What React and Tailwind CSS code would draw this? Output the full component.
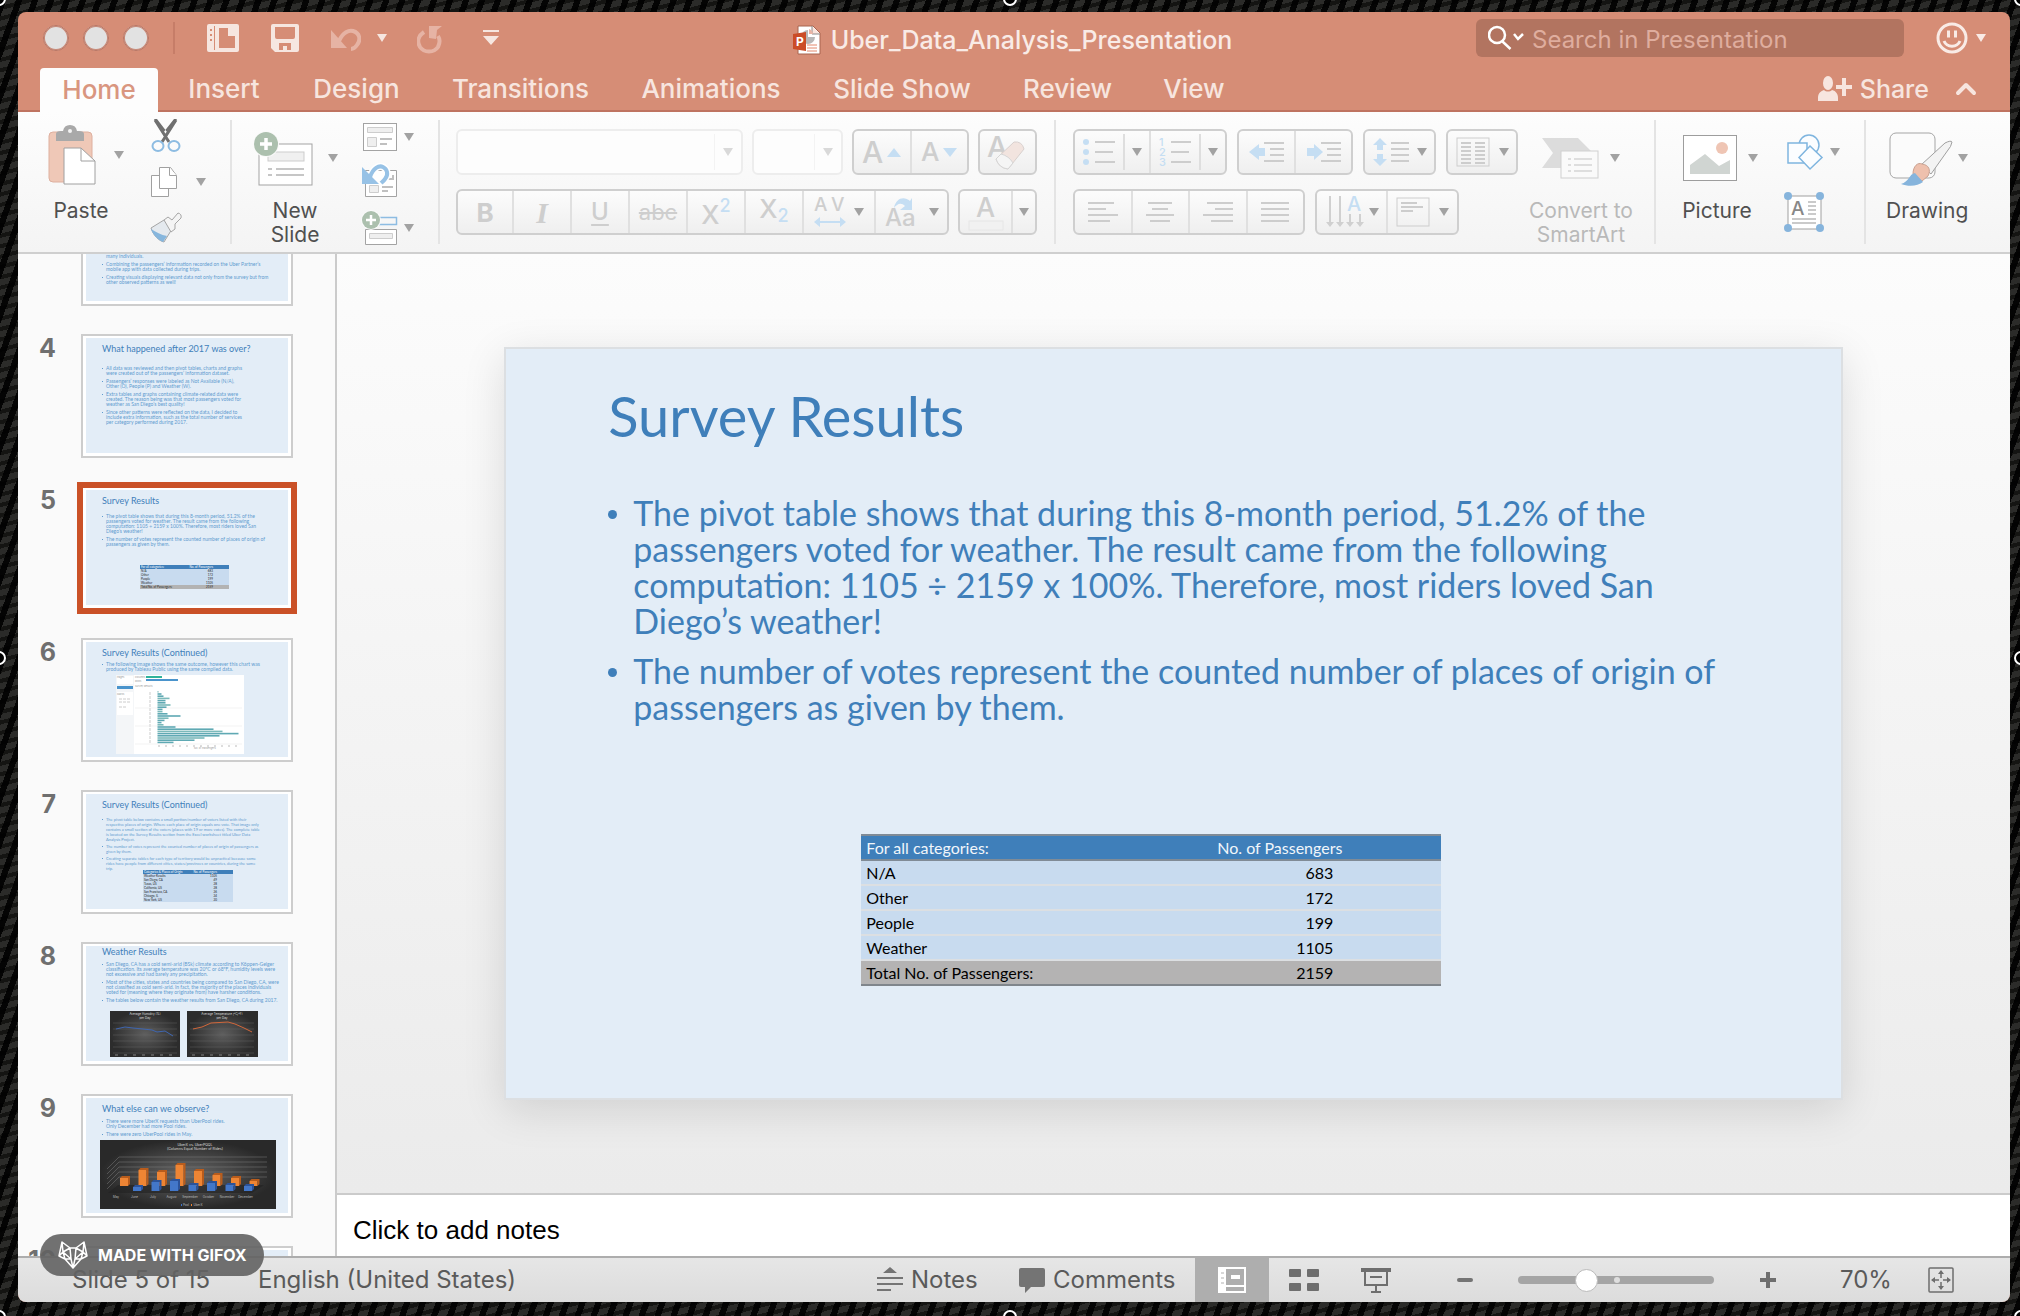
import React from "react";

const Caret = ({ className = "fill-[#a2a2a2]" }) => (
  <svg viewBox="0 0 10 8" width="10" height="8" className={"shrink-0 " + className} aria-hidden="true">
    <path d="M0 0h10L5 8z" />
  </svg>
);

const Sep = () => <div className="mt-2 h-[124px] w-[2px] shrink-0 bg-[#e4e4e4]" />;

/* ---------- title bar ---------- */

function TitleBar() {
  return (
    <header className="flex h-[52px] shrink-0 items-center pl-[25px] pr-6">
      <div className="flex flex-1 items-center">
        <div className="flex gap-[14px]">
          {["Close", "Minimize", "Zoom"].map((n) => (
            <button key={n} aria-label={n} className="size-[26px] rounded-full border border-[#b87361] bg-[#e2e2e2] shadow-[inset_0_0_0_1px_#c98a78]" />
          ))}
        </div>
        <div className="ml-6 h-8 w-[2px] bg-[#c67d68]" />
        <button aria-label="Open from template" className="ml-8">
          <svg width="32" height="30" viewBox="0 0 32 30" fill="#f6e6e0">
            <path fillRule="evenodd" d="M2 1h28a2 2 0 0 1 2 2v24a2 2 0 0 1-2 2H2a2 2 0 0 1-2-2V3a2 2 0 0 1 2-2zM8 3H7v24h1zM12 5v20h16V13h-7V5z" />
            <path d="M22 5l6 6h-6z" />
            <path d="M3 6h2v2H3zM3 11h2v2H3zM3 16h2v2H3z" fill="#d68d76" />
          </svg>
        </button>
        <button aria-label="Save" className="ml-8">
          <svg width="28" height="30" viewBox="0 0 28 30" fill="#f6e6e0">
            <path fillRule="evenodd" d="M2 1h24a2 2 0 0 1 2 2v24a2 2 0 0 1-2 2H4l-4-4V3a2 2 0 0 1 2-2zM4 4v10a2 2 0 0 0 2 2h16a2 2 0 0 0 2-2V4zM8 20v7h4v-4h4v4h4v-7z" />
          </svg>
        </button>
        <button aria-label="Undo" className="ml-8 mt-1">
          <svg width="30" height="24" viewBox="0 0 30 24" fill="none" stroke="#e6b3a4">
            <path d="M0 2v18h16z" fill="#e6b3a4" stroke="none" />
            <path d="M8 13C12 4 18 2 22 3c7 2 8 9 4 14-2 3-4 4-6 4" strokeWidth="4" />
          </svg>
        </button>
        <button aria-label="Undo list" className="ml-4"><Caret className="fill-[#f6e6e0]" /></button>
        <button aria-label="Repeat" className="ml-[30px] mt-1">
          <svg width="26" height="28" viewBox="0 0 26 28" fill="none" stroke="#e6b3a4">
            <path d="M12 0h13l-5 4-1 9-7-1z" fill="#e6b3a4" stroke="none" />
            <path d="M7 6C1 10 0 16 3 21c4 6 14 6 18 0 2-4 2-8 0-11" strokeWidth="4" />
          </svg>
        </button>
        <button aria-label="Customize toolbar" className="ml-10">
          <svg width="16" height="16" viewBox="0 0 16 16" fill="#f6e6e0"><path d="M0 0h16v2H0zM0 6h16l-8 9z" /></svg>
        </button>
      </div>
      <h1 className="flex items-center gap-[10px] pt-1 pr-1 text-[25px] leading-[30px] font-medium text-[#f9ebe6]">
        <svg width="28" height="32" viewBox="0 0 28 32" aria-hidden="true">
          <path d="M5 2h15l7 7v21H5z" fill="#fff" stroke="#a8644f" />
          <path d="M19 2v8h8" fill="#fbe5de" stroke="#8b8b8b" />
          <path d="M15 6v7h7a7 7 0 1 1-7-7z" fill="#b7b7b7" />
          <path d="M16 5a6 6 0 0 1 4 5h-4z" fill="#e9b5a5" />
          <path d="M14 21h10M14 24h10M14 27h10" stroke="#e2886c" />
          <path d="M0 10l13-2v19L0 25z" fill="#cb4c27" />
          <text x="3" y="22" fontSize="12" fontWeight="700" fill="#fff" fontFamily="Inter">P</text>
        </svg>
        Uber_Data_Analysis_Presentation
      </h1>
      <div className="flex flex-1 items-center justify-end">
        <label className="flex h-[38px] w-[428px] items-center rounded-md bg-[#b27460] pl-3">
          <svg width="36" height="28" viewBox="0 0 36 28" fill="none" stroke="#fff" strokeWidth="2.5" aria-hidden="true">
            <circle cx="9" cy="11" r="8" /><path d="M14.500 17.500l8 7.500M26 10l4 5 5-5" />
          </svg>
          <input aria-label="Search in Presentation" placeholder="Search in Presentation" className="ml-2 min-w-0 flex-1 bg-transparent pt-1 text-[24px] leading-[30px] outline-none placeholder:text-[#dfad9e]" />
        </label>
        <button aria-label="Feedback" className="ml-8 flex items-center gap-2">
          <svg width="32" height="34" viewBox="0 0 32 34" fill="none" stroke="#f9ebe6" strokeWidth="3">
            <circle cx="16" cy="17" r="14" /><path d="M12.500 9.500v7M19.500 9.500v7M8 20c3 7 13 7 16 0" />
          </svg>
          <Caret className="fill-[#f9ebe6]" />
        </button>
      </div>
    </header>
  );
}

const TABS = [
  ["Insert", "w-[118px]"], ["Design", "w-[131px]"], ["Transitions", "w-[181px]"], ["Animations", "w-[184px]"],
  ["Slide Show", "w-[182px]"], ["Review", "w-[133px]"], ["View", "w-[104px]"],
];

function TabBar() {
  return (
    <nav className="flex h-[48px] shrink-0 items-end border-b-2 border-[#bf7461] text-[26px] leading-[28px] font-medium text-[#f7e5df]">
      <button className="-mb-[2px] ml-[22px] h-[44px] w-[118px] rounded-t bg-[#fdfdfd] text-[#d99680]">Home</button>
      <div className="ml-[7px] flex h-[42px] flex-1 items-center gap-2">
        {TABS.map(([t, w]) => (
          <button key={t} className={"h-[42px] shrink-0 whitespace-nowrap " + w}>{t}</button>
        ))}
      </div>
      <div className="flex h-[42px] items-center pr-[33px]">
        <button className="flex items-center gap-2">
          <svg width="34" height="26" viewBox="0 0 34 26" fill="#f7e5df" aria-hidden="true">
            <ellipse cx="10" cy="7" rx="5" ry="7" />
            <path d="M0 25v-3c0-5 3-7 6-8 2 2 6 2 8 0 4 1 6 4 6 8v3zM24 2h4v7h6v4h-6v7h-4v-7h-6V9h6z" />
          </svg>
          <span className="text-[25px]">Share</span>
        </button>
        <button aria-label="Collapse ribbon" className="ml-[26px]">
          <svg width="22" height="16" viewBox="0 0 22 16" fill="none" stroke="#f7e5df" strokeWidth="4" strokeLinecap="round" strokeLinejoin="round"><path d="M3 12l8-8 8 8" /></svg>
        </button>
      </div>
    </nav>
  );
}

/* ---------- ribbon ---------- */

const PasteIcon = () => (
  <svg width="48" height="60" viewBox="0 0 48 60">
    <rect x="1" y="7" width="43" height="50" rx="4" fill="#efc8b7" stroke="#deb09f" />
    <path d="M8 16V9q0-3 5-3h2q1-6 7-6t7 6h2q5 0 5 3v7z" fill="#a9a9a9" />
    <circle cx="22" cy="6" r="2" fill="#f3f3f3" />
    <path d="M16 23h17l14 13v23H16z" fill="#fff" stroke="#a0a0a0" />
    <path d="M33 23v13h14" fill="none" stroke="#a0a0a0" />
  </svg>
);
const CutIcon = () => (
  <svg width="32" height="34" viewBox="0 0 32 34" fill="none">
    <path d="M4 0l3 0 10 13 -3 4zM27 0h-3L13 14l3 3z" fill="#707070" />
    <path d="M5 1l14 22M26 1L12 23" stroke="#707070" strokeWidth="3" />
    <ellipse cx="8" cy="27" rx="5.500" ry="5" stroke="#8dbce2" strokeWidth="2" />
    <ellipse cx="24" cy="27" rx="5.500" ry="5" stroke="#8dbce2" strokeWidth="2" />
  </svg>
);
const CopyIcon = () => (
  <svg width="32" height="32" viewBox="0 0 32 32" fill="#fff" stroke="#a0a0a0">
    <path d="M1.500 9.500h17v21h-17z" /><path d="M9.500 1.500h11l6 8v13h-17z" /><path d="M19.500 1.500v8h7" />
  </svg>
);
const BrushIcon = () => (
  <svg width="32" height="30" viewBox="0 0 32 30">
    <path d="M1 15l13-8 8 9-8 13C9 28 3 22 1 15z" fill="#e4e9ee" stroke="#a5a5a5" />
    <path d="M1 16c5 3 10 6 16 7l-4 6C8 27 3 22 1 16z" fill="#86b6dd" />
    <path d="M14 7l4-3 4 3 6-7q4 1 3 5l-6 6v5l-4 3z" fill="#f4f4f4" stroke="#a5a5a5" />
  </svg>
);
const NewSlideIcon = () => (
  <svg width="60" height="64" viewBox="0 0 60 64">
    <rect x="5" y="18" width="53" height="41" fill="#fff" stroke="#a3a3a3" />
    <rect x="14" y="26" width="36" height="9" fill="#f0f0f0" stroke="#cdcdcd" />
    <path d="M14 43h4M22 43h28M14 49h4M22 49h28" stroke="#c6c6c6" strokeWidth="2" />
    <circle cx="12" cy="18" r="13" fill="#fafafa" /><circle cx="12" cy="18" r="12" fill="#acc0ae" />
    <path d="M12 12v12M6 18h12" stroke="#fff" strokeWidth="3.500" />
  </svg>
);
const LayoutIcon = () => (
  <svg width="36" height="30" viewBox="0 0 36 30" fill="#efefef">
    <rect x="1.500" y="1.500" width="33" height="27" fill="#fff" stroke="#a3a3a3" />
    <path d="M5.500 5.500h25v5h-25zM5.500 15.500h9v9h-9z" stroke="#cdcdcd" /><path d="M18 17h12M18 22h7" stroke="#c0c0c0" strokeWidth="2" />
  </svg>
);
const ResetIcon = () => (
  <svg width="36" height="36" viewBox="0 0 36 36" fill="none">
    <path d="M3.500 8.500h31v26h-31z" fill="#fff" stroke="#a3a3a3" />
    <path d="M7.500 23.500h9v7h-9z" fill="#efefef" stroke="#cdcdcd" /><path d="M20 25h11M20 29h6M24 17h7v-4" stroke="#c0c0c0" strokeWidth="2" />
    <path d="M8 15c3-9 9-12 13-10s6 7 2 12c-1 2-3 3-4 4" stroke="#fff" strokeWidth="7" />
    <path d="M0 5v17h17z" fill="#97c2e6" /><path d="M8 15c3-9 9-12 13-10s6 7 2 12c-1 2-3 3-4 4" stroke="#97c2e6" strokeWidth="4" />
  </svg>
);
const SectionIcon = () => (
  <svg width="36" height="36" viewBox="0 0 36 36" fill="none">
    <path d="M14 7.500h20.500v7H14" stroke="#8dbce2" strokeWidth="1.500" />
    <path d="M3.500 19.500h31v15h-31z" fill="#fff" stroke="#a3a3a3" /><path d="M7.500 23.500h23v5h-23z" fill="#efefef" stroke="#cdcdcd" />
    <circle cx="9" cy="10" r="10" fill="#fafafa" /><circle cx="9" cy="10" r="9" fill="#acc0ae" /><path d="M9 5v10M4 10h10" stroke="#fff" strokeWidth="2.500" />
  </svg>
);
const SmartIcon = () => (
  <svg width="56" height="42" viewBox="0 0 56 42">
    <path d="M0 1h36l15 15-15 15H0l11-15z" fill="#dcdcdc" />
    <rect x="19" y="14" width="37" height="27" fill="#fafafa" stroke="#d0d0d0" />
    <path d="M26 22h3M32 22h18M26 28h3M32 28h18M26 34h3M32 34h18" stroke="#dedede" strokeWidth="2" />
  </svg>
);
const PictureIcon = () => (
  <svg width="54" height="48" viewBox="0 0 54 48">
    <rect x=".5" y="1.500" width="53" height="45" fill="#fff" stroke="#9d9d9d" />
    <circle cx="39" cy="14" r="6" fill="#efc5b4" />
    <path d="M7 40V31l15-11 14 12 11-6v14z" fill="#d0d5d2" />
  </svg>
);
const DrawingIcon = () => (
  <svg width="64" height="58" viewBox="0 0 64 58">
    <rect x="1" y="4" width="45" height="45" rx="6" fill="#fbfbfb" stroke="#a5a5a5" />
    <path d="M32 36L56 14q6-3 7-1-1 5-4 8L42 45z" fill="#f3f3f3" stroke="#a0a0a0" />
    <path d="M24 45c0-8 5-12 9-10 7 1 9 6 6 12l-6 5z" fill="#eec0ad" stroke="#c9a191" />
    <path d="M12 55c8-2 8-10 14-11l8 9c-5 4-14 5-22 2z" fill="#86b4dc" />
  </svg>
);
const ShapesIcon = () => (
  <svg width="40" height="36" viewBox="0 0 40 36" fill="#fbfdff" stroke="#7fb5df" strokeWidth="1.500">
    <circle cx="25" cy="11" r="10" /><path d="M4 9h19v20H4z" /><path d="M26 12l12 11.500L26 35 15 23.500z" />
  </svg>
);
const TextBoxIcon = () => (
  <svg width="40" height="40" viewBox="0 0 40 40">
    <rect x="4" y="4" width="33" height="33" fill="#fff" stroke="#a0a0a0" />
    <text x="7" y="23" fontFamily="Inter" fontSize="19" fill="#888" fontWeight="500">A</text>
    <path d="M24 10h8M24 14h8M24 18h8M24 22h8M8 27h24M8 31h24" stroke="#cacaca" strokeWidth="2" />
    <g fill="#86b4dc"><circle cx="4" cy="4" r="4" /><circle cx="36" cy="4" r="4" /><circle cx="4" cy="36" r="4" /><circle cx="36" cy="36" r="4" /></g>
  </svg>
);

function Big({ box, row, icon, label, dim }) {
  return (
    <button className={"flex shrink-0 flex-col " + box}>
      <span className={"flex h-[87px] items-center pt-[5px] " + row}>{icon}<Caret /></span>
      <span className={"w-full text-center text-[21px] leading-[24px] whitespace-pre-line " + (dim ? "text-[#b9b9b9]" : "text-[#505050]")}>{label}</span>
    </button>
  );
}

const Small = ({ name, icon, caret, className }) => (
  <button aria-label={name} className={"flex items-center " + className}>{icon}{caret && <Caret />}</button>
);

const Group = ({ className, children }) => (
  <div className={"flex h-[46px] shrink-0 divide-x-2 divide-[#e0e0e0] rounded-md border-2 border-[#cfcfcf] bg-linear-to-b from-[#fcfcfc] to-[#efefef] " + className}>{children}</div>
);
const Cell = ({ name, className = "flex-1", children }) => (
  <button aria-label={name} className={"flex items-center justify-center text-[#cecece] " + className}>{children}</button>
);
const Lines = ({ d, w = 32, children }) => (
  <svg width={w} height="30" viewBox={"0 0 " + w + " 30"} fill="none" stroke="#cdcdcd" strokeWidth="2"><path d={d} />{children}</svg>
);

function FontGroup() {
  return (
    <div className="flex shrink-0 flex-col gap-[14px] pt-[17px] pr-[17px] pl-4">
      <div className="flex gap-[9px]">
        {[["Font", "w-[287px]"], ["Font size", "w-[91px]"]].map(([n, w]) => (
          <div key={n} className={"flex h-[46px] items-center rounded-md border-2 border-[#ededed] bg-[#fdfdfd] pr-2 " + w}>
            <select aria-label={n} disabled className="h-full min-w-0 flex-1 appearance-none bg-transparent" />
            <span className="mr-2 h-9 w-px bg-[#f3f3f3]" />
            <Caret className="fill-[#d9d9d9]" />
          </div>
        ))}
        <Group className="w-[117px]">
          <Cell name="Increase font size"><span className="text-[30px] leading-[36px] font-medium">A</span><svg width="14" height="9" viewBox="0 0 14 9" className="ml-1"><path d="M7 0l7 9H0z" fill="#c5def3" /></svg></Cell>
          <Cell name="Decrease font size"><span className="text-[26px] leading-[36px] font-medium">A</span><svg width="14" height="9" viewBox="0 0 14 9" className="ml-1"><path d="M7 9L0 0h14z" fill="#c5def3" /></svg></Cell>
        </Group>
        <Group className="w-[59px]">
          <Cell name="Clear formatting">
            <svg width="44" height="40" viewBox="0 0 44 40">
              <text x="1" y="25" fontFamily="Inter" fontSize="29" fontWeight="500" fill="#cecece">A</text>
              <path d="M10 27L28 10q8-1 10 7L22 37q-9-1-12-10z" fill="#f2e4df" stroke="#d8d0ce" />
              <path d="M10 27l5-5q8 2 12 9l-5 6q-9-1-12-10z" fill="#f5f5f5" stroke="#d5d5d5" />
            </svg>
          </Cell>
        </Group>
      </div>
      <div className="flex gap-[9px]">
        <Group className="w-[493px]">
          <Cell name="Bold" className="w-[56px] text-[26px] font-bold">B</Cell>
          <Cell name="Italic" className="w-[58px] font-['Liberation_Serif'] text-[30px] font-bold italic">I</Cell>
          <Cell name="Underline" className="w-[58px] text-[24px] font-medium underline underline-offset-4">U</Cell>
          <Cell name="Strikethrough" className="w-[58px] text-[22px] line-through">abc</Cell>
          <Cell name="Superscript" className="w-[58px] pt-1 text-[26px] font-medium">X<sup className="-top-2 text-[18px] text-[#c5def3]">2</sup></Cell>
          <Cell name="Subscript" className="w-[58px] pb-2 text-[26px] font-medium">X<sub className="top-2 text-[18px] text-[#c5def3]">2</sub></Cell>
          <Cell name="Character spacing" className="w-[72px] gap-2">
            <svg width="32" height="34" viewBox="0 0 32 34"><text x="0" y="16" fontFamily="Inter" fontSize="19" fontWeight="500" fill="#cecece">A</text><text x="17" y="16" fontFamily="Inter" fontSize="19" fontWeight="500" fill="#cecece">V</text><path d="M0 27l6-5v4h20v-4l6 5-6 5v-4H6v4z" fill="#c5def3" /></svg>
            <Caret />
          </Cell>
          <Cell name="Change case" className="flex-1 gap-2">
            <svg width="36" height="34" viewBox="0 0 36 34"><text x="0" y="31" fontFamily="Inter" fontSize="24" fontWeight="500" fill="#cecece">Aa</text><path d="M9 13C11 3 19 1 25 6l2-3v12H15l5-4c-4-4-8-2-11 2z" fill="#c5def3" /></svg>
            <Caret />
          </Cell>
        </Group>
        <Group className="w-[79px]">
          <Cell name="Font color" className="w-[53px]">
            <svg width="36" height="40" viewBox="0 0 36 40"><text x="8" y="25" fontFamily="Inter" fontSize="27" fontWeight="500" fill="#cecece">A</text><rect x="1" y="29" width="34" height="9" fill="#f1f1f1" stroke="#e6e6e6" /></svg>
          </Cell>
          <Cell name="Font color options"><Caret /></Cell>
        </Group>
      </div>
    </div>
  );
}

function ParagraphGroup() {
  return (
    <div className="flex shrink-0 flex-col gap-[14px] pt-[17px] pl-[17px]">
      <div className="flex gap-[10px]">
        <Group className="w-[154px]">
          {["Bullets", "Numbering"].map((n, i) => (
            <div key={n} className="flex flex-1 items-center">
              <Cell name={n} className="w-[48px]">
                <Lines w={32} d="M12 5h20M12 15h18M12 25h20">
                  {i === 0 ? (
                    <g fill="#c5def3" stroke="none"><circle cx="3" cy="5" r="3" /><circle cx="3" cy="15" r="3" /><circle cx="3" cy="25" r="3" /></g>
                  ) : (
                    <g fill="#c5def3" stroke="none" fontFamily="Inter" fontSize="11" fontWeight="500"><text x="0" y="9">1</text><text x="0" y="19">2</text><text x="0" y="29">3</text></g>
                  )}
                </Lines>
              </Cell>
              <span className="h-9 w-[2px] bg-[#dedede]" />
              <Cell name={n + " options"}><Caret /></Cell>
            </div>
          ))}
        </Group>
        <Group className="w-[116px]">
          <Cell name="Decrease indent"><Lines w={36} d="M15 6h20M21 12h14M21 18h14M15 24h20"><path d="M0 15l10-8v4h6v8h-6v4z" fill="#c5def3" stroke="none" /></Lines></Cell>
          <Cell name="Increase indent"><Lines w={36} d="M15 6h20M21 12h14M21 18h14M15 24h20"><path d="M17 15L8 7v4H1v8h7v4z" fill="#c5def3" stroke="none" /></Lines></Cell>
        </Group>
        <Group className="w-[73px]">
          <Cell name="Line spacing" className="flex-1 gap-2"><Lines w={36} d="M18 6h18M18 12h18M18 18h18M18 24h18"><path d="M7 1l7 7h-4v5H4V8H0zM7 29l7-7h-4v-5H4v5H0z" fill="#c5def3" stroke="none" /></Lines><Caret /></Cell>
        </Group>
        <Group className="w-[72px]">
          <Cell name="Columns" className="flex-1 gap-[9px]">
            <Lines w={34} d="M5 6h10M5 10h10M5 14h10M5 18h10M5 22h10M5 26h10M19 6h10M19 10h10M19 14h10M19 18h10M19 22h10M19 26h10"><rect x="1" y="1" width="32" height="28" strokeWidth="1" /></Lines>
            <Caret />
          </Cell>
        </Group>
      </div>
      <div className="flex gap-[10px]">
        <Group className="w-[232px]">
          <Cell name="Align left"><Lines d="M1 6h26M1 12h18M1 18h30M1 24h22" /></Cell>
          <Cell name="Center"><Lines d="M4 6h24M8 12h16M2 18h28M6 24h20" /></Cell>
          <Cell name="Align right"><Lines d="M5 6h26M13 12h18M1 18h30M9 24h22" /></Cell>
          <Cell name="Justify"><Lines d="M2 6h28M2 12h28M2 18h28M2 24h28" /></Cell>
        </Group>
        <Group className="w-[144px]">
          <Cell name="Text direction" className="flex-1 gap-1">
            <svg width="40" height="36" viewBox="0 0 40 36" fill="#d0d0d0">
              <path d="M4 2h2v26h3l-4 5-4-5h3zM14 2h2v26h3l-4 5-4-5h3zM24 20h2v8h3l-4 5-4-5h3zM34 20h2v8h3l-4 5-4-5h3z" />
              <text x="22" y="17" fontFamily="Inter" fontSize="20" fill="#c5def3" fontWeight="500">A</text>
            </svg>
            <Caret />
          </Cell>
          <Cell name="Align text" className="flex-1 gap-[9px]"><Lines w={34} d="M5 6h16M5 10h22M5 14h12"><rect x="1" y="1" width="32" height="28" strokeWidth="1" /></Lines><Caret /></Cell>
        </Group>
      </div>
    </div>
  );
}

function Ribbon() {
  return (
    <div className="flex h-[142px] shrink-0 border-b-2 border-[#cfcfcf] bg-linear-to-b from-[#fdfdfd] to-[#f4f4f4] [&_svg]:overflow-visible">
      <div className="flex w-[212px] shrink-0 pl-5">
        <Big box="w-[86px]" row="pl-[10px] gap-[18px] pb-[6px]" icon={<PasteIcon />} label="Paste" />
        <div className="ml-[26px] flex flex-col pt-px">
          <Small name="Cut" className="h-[46px]" icon={<CutIcon />} />
          <Small name="Copy" className="h-[46px] gap-[14px]" icon={<CopyIcon />} caret />
          <Small name="Format painter" className="h-[46px]" icon={<BrushIcon />} />
        </div>
      </div>
      <Sep />
      <div className="flex w-[206px] shrink-0 pl-5">
        <Big box="w-[86px]" row="pl-[2px] gap-[14px]" icon={<NewSlideIcon />} label={"New\nSlide"} />
        <div className="ml-6 flex flex-col pt-px">
          <Small name="Layout" className="h-[46px] gap-[6px] pt-[2px]" icon={<LayoutIcon />} caret />
          <Small name="Reset" className="h-[46px] pb-1" icon={<ResetIcon />} />
          <Small name="Section" className="h-[46px] gap-[6px]" icon={<SectionIcon />} caret />
        </div>
      </div>
      <Sep />
      <FontGroup />
      <Sep />
      <div className="flex w-[598px] shrink-0">
        <ParagraphGroup />
        <Big box="ml-2 w-[110px]" row="pl-4 gap-3" icon={<SmartIcon />} label={"Convert to\nSmartArt"} dim />
      </div>
      <Sep />
      <div className="flex w-[208px] shrink-0 pl-5">
        <Big box="w-[82px]" row="pl-[7px] gap-[11px]" icon={<PictureIcon />} label="Picture" />
        <div className="ml-[26px] flex flex-col pt-[10px]">
          <Small name="Shapes" className="h-[60px] gap-[6px]" icon={<ShapesIcon />} caret />
          <Small name="Text box" className="h-[60px]" icon={<TextBoxIcon />} />
        </div>
      </div>
      <Sep />
      <div className="flex flex-1 pl-5">
        <Big box="w-[82px]" row="pl-[3px] gap-[5px]" icon={<DrawingIcon />} label="Drawing" />
      </div>
    </div>
  );
}

/* ---------- thumbnails ---------- */

function MiniList({ items, className = "text-[5px] leading-[5px] gap-[3px]" }) {
  return (
    <ul className={"flex flex-col pl-4 whitespace-pre text-[#5f9bcf] " + className}>
      {items.map((t) => (
        <li key={t} className="flex gap-[3px]"><span className="mt-[2px] size-px bg-[#5f9bcf]" /><span>{t}</span></li>
      ))}
    </ul>
  );
}

const MiniTable = ({ rows, className }) => (
  <table className={"table-fixed border-collapse bg-[#c8dbef] text-left text-[3px] leading-[4px] text-[#222] " + className}>
    <tbody>
      {rows.map(([a, b], i) => (
        <tr key={a} className={i === 0 ? "bg-[#3f7fba] text-white" : a.startsWith("Total") ? "bg-[#b3b3b3]" : ""}>
          <td className="p-0 pl-px whitespace-nowrap">{a}</td><td className="p-0 pr-4 text-right whitespace-nowrap">{b}</td>
        </tr>
      ))}
    </tbody>
  </table>
);

const BARS = [1, 4, 6, 12, 8, 8, 13, 9, 5, 5, 10, 23, 11, 7, 4, 6, 18, 56, 65, 81, 62, 47, 37, 16];
const TableauChart = () => (
  <svg width="128" height="79" viewBox="0 0 128 79" className="ml-[30px] shrink-0">
    <rect width="128" height="79" fill="#fff" />
    <path d="M0 0h18v79H0z" fill="#f4f6f8" /><path d="M1 1h16v8H1zM1 17h16v23H1z" fill="#fff" />
    <path d="M1 11h16v3H1zM30 4h32v2H30z" fill="#4a94cc" /><path d="M30 1h16v2H30z" fill="#2fb39b" />
    <g fontFamily="Inter" fontSize="2.500" fill="#999"><text x="1" y="3">Pages</text><text x="1" y="20">Marks</text><text x="19" y="3">Columns</text><text x="19" y="7">Rows</text><text x="19" y="12">Survey Results</text><text x="78" y="74">No. of Passengers</text></g>
    <path d="M3 24h12M3 27h12M3 32h8M34 17v52" stroke="#ccc" strokeDasharray="3 1" />
    <path d="M19 33h107M19 51h107M19 69h107" stroke="#e4e4e4" strokeWidth=".5" />
    {BARS.map((b, i) => <rect key={i} x="41.500" y={16 + i * 2.200} width={b} height="1.600" fill={i % 3 ? "#5fa9b3" : "#7bb9ba"} />)}
    <path d="M42 71h84" stroke="#bbb" strokeDasharray="2 5" />
  </svg>
);

const DarkLine = ({ title, d, color, w }) => (
  <svg width={w} height="46" viewBox={"0 0 " + w + " 46"}>
    <defs><radialGradient id={"g" + w}><stop offset="0" stopColor="#5e5e5e" /><stop offset="1" stopColor="#2c2c2c" /></radialGradient></defs>
    <rect width={w} height="46" fill={"url(#g" + w + ")"} />
    <text x="35" y="4" fontSize="3" textAnchor="middle" fill="#ddd" fontFamily="Inter">{title}</text>
    <text x="35" y="8" fontSize="3" textAnchor="middle" fill="#ddd" fontFamily="Inter">per Day</text>
    <path d="M3 12h64M3 18h64M3 24h64M3 30h64M3 36h64M3 42h64" stroke="#6b6b6b" strokeWidth=".4" />
    <path d={d} fill="none" stroke={color} strokeWidth="1" />
    <path d="M5 44h62" stroke="#999" strokeWidth=".8" strokeDasharray="3 6" />
  </svg>
);

const ORANGE = [8, 16, 14, 21, 15, 11, 8, 5];
const BLUE = [4, 9, 10, 6, 8, 6, 5];
const UberChart = () => (
  <svg width="176" height="69" viewBox="0 0 176 69" className="ml-[14px] shrink-0">
    <defs><radialGradient id="uber"><stop offset="0" stopColor="#666" /><stop offset="1" stopColor="#292929" /></radialGradient></defs>
    <rect width="176" height="69" fill="url(#uber)" />
    <g fontFamily="Inter" fontSize="3.500" fill="#ddd" textAnchor="middle"><text x="95" y="6">UberX vs. UberPOOL</text><text x="95" y="10">(Columns Equal Number of Rides)</text></g>
    <path d="M7 29l12-12h148M7 34l12-12h148M7 39l12-12h148M7 44l12-12h148M7 49l12-12h148" fill="none" stroke="#7c7c7c" strokeWidth=".5" />
    <path d="M18 45h146l-12 8H8z" fill="#222" opacity=".6" />
    {ORANGE.map((h, i) => (
      <g key={i}><rect x={20 + i * 18.500} y={46 - h} width="8" height={h} fill="#ee8534" /><path d={`M${20 + i * 18.500} ${46 - h}l2-2h8v${h}l-2 2v-${h}z`} fill="#b85c1c" /></g>
    ))}
    {BLUE.map((h, i) => (
      <g key={i}><rect x={33 + i * 18.500} y={51 - h} width="8" height={h} fill="#4377c9" /><path d={`M${33 + i * 18.500} ${51 - h}l2-2h8v${h}l-2 2v-${h}z`} fill="#2c539a" /></g>
    ))}
    <g fontFamily="Inter" fontSize="3" fill="#bbb" textAnchor="middle">
      {["May", "June", "July", "August", "September", "October", "November", "December"].map((m, i) => <text key={m} x={16 + i * 18.500} y="58">{m}</text>)}
      <text x="86" y="66">Pool</text><text x="98" y="66">UberX</text>
    </g>
    <path d="M81 64h1v2h-1z" fill="#4377c9" /><path d="M91 64h1v2h-1z" fill="#ee8534" />
  </svg>
);

const MiniTitle = ({ className = "pt-[6px]", children }) => (
  <p className={"shrink-0 pl-4 text-[9px] leading-[10px] whitespace-nowrap text-[#3f7fba] " + className}>{children}</p>
);

const SLIDES = [
  {
    n: 3,
    body: <MiniList className="mt-[63px] gap-[3px] text-[5px] leading-[5px]" items={["\nmany individuals.", "Combining the passengers’ information recorded on the Uber Partner’s\nmobile app with data collected during trips.", "Creating visuals displaying relevant data not only from the survey but from\nother observed patterns as well!"]} />,
  },
  {
    n: 4,
    body: (
      <>
        <MiniTitle>What happened after 2017 was over?</MiniTitle>
        <MiniList className="mt-[12px] gap-[3px] text-[5px] leading-[5px]" items={["All data was reviewed and then pivot tables, charts and graphs\nwere created out of the passengers’ information dataset.", "Passengers’ responses were labeled as Not Available (N/A),\nOther (O), People (P) and Weather (W).", "Extra tables and graphs containing climate-related data were\ncreated. The reason being was that most passengers voted for\nweather as San Diego’s best quality!", "Since other patterns were reflected on the data, I decided to\ninclude extra information, such as the total number of services\nper category performed during 2017."]} />
      </>
    ),
  },
  {
    n: 5, selected: true,
    body: (
      <>
        <MiniTitle>Survey Results</MiniTitle>
        <MiniList className="mt-2 gap-[3px] text-[5px] leading-[5px]" items={["The pivot table shows that during this 8-month period, 51.2% of the\npassengers voted for weather. The result came from the following\ncomputation: 1105 ÷ 2159 x 100%. Therefore, most riders loved San\nDiego’s weather!", "The number of votes represent the counted number of places of origin of\npassengers as given by them."]} />
        <MiniTable className="mt-[18px] ml-[54px] w-[89px]" rows={[["For all categories:", "No. of Passengers"], ["N/A", "683"], ["Other", "172"], ["People", "199"], ["Weather", "1105"], ["Total No. of Passengers:", "2159"]]} />
      </>
    ),
  },
  {
    n: 6,
    body: (
      <>
        <MiniTitle>Survey Results (Continued)</MiniTitle>
        <MiniList className="mt-1 mb-[3px] text-[5px] leading-[5px]" items={["The following image shows the same outcome, however this chart was\nproduced by Tableau Public using the same compiled data."]} />
        <TableauChart />
      </>
    ),
  },
  {
    n: 7,
    body: (
      <>
        <MiniTitle>Survey Results (Continued)</MiniTitle>
        <MiniList className="mt-[7px] gap-[2px] text-[4px] leading-[5px]" items={["The pivot table below contains a small portion/number of voters listed with their\nrespective places of origin. Where each place of origin equals one vote. That image only\ncontains a small section of the voters (places with 19 or more votes). The complete table\nis located on the Survey Results section from the Excel worksheet titled Uber Data\nAnalysis Project.", "The number of votes represent the counted number of places of origin of passengers as\ngiven by them.", "Creating separate tables for each type of territory would be unpractical because some\nrides have people from different cities, states/provinces or countries, during the same\ntrip."]} />
        <MiniTable className="-mt-px ml-[57px] w-[90px]" rows={[["Categories & Places of Origin", "No. of Passengers"], ["Weather Results", "1105"], ["San Diego, CA", "49"], ["Texas, US", "28"], ["California, US", "28"], ["San Francisco, CA", "26"], ["Chicago, IL", "24"], ["New York, US", "20"]]} />
      </>
    ),
  },
  {
    n: 8,
    body: (
      <>
        <MiniTitle className="pt-px">Weather Results</MiniTitle>
        <MiniList className="mt-[5px] gap-[3px] text-[5px] leading-[5px]" items={["San Diego, CA has a cold semi-arid (BSk) climate according to Köppen-Geiger\nclassification. Its average temperature was 20ºC or 68ºF, humidity levels were\nnot excessive and had barely any precipitation.", "Most of the cities, states and countries being compared to San Diego, CA, were\nnot classified as cold semi-arid. In fact, the majority of the places individuals\nvoted for (meaning where they originate from) have harsher conditions.", "The tables below contain the weather results from San Diego, CA during 2017."]} />
        <div className="mt-2 ml-6 flex gap-[7px]">
          <DarkLine w={70} title="Average Humidity (%)" color="#3f66b0" d="M6 18l9-2 8 1 10 1 9 1 5 2 8-1 8 5" />
          <DarkLine w={71} title="Average Temperature (ºC/ºF)" color="#d2673a" d="M6 18l9-2 9-4 17-1 7 2 9 4 8 4" />
        </div>
      </>
    ),
  },
  {
    n: 9,
    body: (
      <>
        <MiniTitle>What else can we observe?</MiniTitle>
        <MiniList className="mt-[5px] mb-[3px] gap-[3px] text-[5px] leading-[5px]" items={["There were more UberX requests than UberPool rides.\nOnly December had more Pool rides.", "There were zero UberPool rides in May."]} />
        <UberChart />
      </>
    ),
  },
  { n: 10, body: null },
];

function Thumbnails() {
  return (
    <aside className="w-[319px] shrink-0 overflow-hidden border-r-2 border-[#cbcbcb] bg-[#fafafa]">
      <ol className="-mt-[72px]">
        {SLIDES.map((s) => (
          <li key={s.n} className="flex h-[152px]">
            <span className="flex w-[38px] shrink-0 justify-end text-[25px] leading-[28px] font-bold text-[#6f6f6f]">{s.n}</span>
            <button aria-label={"Slide " + s.n} className={"ml-[25px] block h-[124px] w-[212px] overflow-hidden border-2 bg-white p-[2px] text-left " + (s.selected ? "border-transparent outline-6 -outline-offset-2 outline-[#ca5127]" : "border-[#cdcdcd]")}>
              <span className="flex h-full w-full flex-col overflow-hidden border-r border-b border-l border-white bg-[#e3edf7] font-[Lato,sans-serif]">{s.body}</span>
            </button>
          </li>
        ))}
      </ol>
    </aside>
  );
}

/* ---------- slide ---------- */

const BULLETS = [
  ["The pivot table shows that during this 8-month period, 51.2% of the", "passengers voted for weather. The result came from the following", "computation: 1105 ÷ 2159 x 100%. Therefore, most riders loved San", "Diego’s weather!"],
  ["The number of votes represent the counted number of places of origin of", "passengers as given by them."],
];
const ROWS = [["N/A", 683], ["Other", 172], ["People", 199], ["Weather", 1105]];

function Slide() {
  return (
    <article className="aspect-[1337/753] w-4/5 overflow-hidden border-2 border-[#dcdfe2] bg-[#e3edf7] font-[Lato,sans-serif] text-[#3f7fba] shadow-[0_10px_40px_rgba(0,0,0,0.12)]">
      <h2 className="pt-8 pl-[102px] text-[56px] leading-[70px]">Survey Results</h2>
      <ul className="mt-[44px] flex flex-col gap-[14px] pl-[102px] text-[34px] leading-[36px]">
        {BULLETS.map((lines) => (
          <li key={lines[0]} className="flex">
            <span className="mt-[15px] mr-4 size-[9px] shrink-0 rounded-full bg-[#3f7fba]" />
            <span>{lines.map((l) => <span key={l} className="block whitespace-nowrap">{l}</span>)}</span>
          </li>
        ))}
      </ul>
      <table className="mt-[109px] ml-[355px] w-[580px] border-collapse bg-[#c8dbef] text-[16px] leading-[23px] text-black">
        <thead>
          <tr className="border-y-2 border-[#808b96] bg-[#3f7fba] text-[#f1f6fb]">
            <th className="h-[25px] p-0 pl-[5px] text-left font-normal">For all categories:</th>
            <th className="w-[224px] p-0 text-left font-normal">No. of Passengers</th>
          </tr>
        </thead>
        <tbody>
          {ROWS.map(([a, b]) => (
            <tr key={a} className="border-b-2 border-[#dcdfe2]">
              <td className="h-[25px] p-0 pl-[5px]">{a}</td><td className="p-0 pr-[108px] text-right">{b}</td>
            </tr>
          ))}
        </tbody>
        <tfoot>
          <tr className="border-y-2 border-[#80868c] bg-[#b4b3b3]">
            <td className="h-[25px] p-0 pl-[5px]">Total No. of Passengers:</td><td className="p-0 pr-[108px] text-right">2159</td>
          </tr>
        </tfoot>
      </table>
    </article>
  );
}

/* ---------- status bar ---------- */

function StatusBar() {
  return (
    <footer className="flex h-[46px] shrink-0 items-center border-t-2 border-[#adadad] bg-linear-to-b from-[#e6e6e6] to-[#dcdcdc] text-[24px] leading-[28px] text-[#5a5a5a]">
      <span className="w-[240px] pl-[54px] whitespace-nowrap">Slide 5 of 15</span>
      <button className="whitespace-nowrap">English (United States)</button>
      <div className="flex-1" />
      <button className="flex w-[142px] items-center gap-2">
        <svg width="26" height="26" viewBox="0 0 26 26" fill="#747474"><path d="M13 0l7 6H6zM0 10h26v2H0zM0 16h26v2H0zM0 22h14v2H0z" /></svg>
        Notes
      </button>
      <button className="flex w-[176px] items-center gap-2">
        <svg width="26" height="26" viewBox="0 0 26 26" fill="#747474"><path d="M2 1h22a2 2 0 0 1 2 2v15a2 2 0 0 1-2 2H12l-6 6v-6H2a2 2 0 0 1-2-2V3a2 2 0 0 1 2-2z" /></svg>
        Comments
      </button>
      <button aria-label="Normal view" className="flex h-full w-[74px] items-center justify-center bg-[#aeaeae]">
        <svg width="28" height="26" viewBox="0 0 28 26" fill="none" stroke="#fff" strokeWidth="2"><path d="M1 1h26v24H1z" /><path d="M0 0h8v26H0z" fill="#fff" stroke="none" /><path d="M8 19h19" /><path d="M13 8h9v4h-9z" fill="#fff" stroke="none" /><path d="M3 6h3M3 11h3M3 16h3" stroke="#d8d8d8" /></svg>
      </button>
      <button aria-label="Slide sorter" className="ml-5">
        <svg width="30" height="22" viewBox="0 0 30 22" fill="#6e6e6e"><rect width="12" height="8" rx="1" /><rect x="18" width="12" height="8" rx="1" /><rect y="14" width="12" height="8" rx="1" /><rect x="18" y="14" width="12" height="8" rx="1" /></svg>
      </button>
      <button aria-label="Slide show" className="ml-[42px]">
        <svg width="30" height="26" viewBox="0 0 30 26" fill="none" stroke="#6e6e6e" strokeWidth="2"><path d="M0 3h30" strokeWidth="4" /><path d="M4 5v13h22V5M9 10h12M15 18v6M10 25h10" /></svg>
      </button>
      <button aria-label="Zoom out" className="ml-[66px] h-1 w-4 rounded-sm bg-[#747474]" />
      <div className="relative ml-[45px] flex w-[196px] items-center">
        <input type="range" aria-label="Zoom" defaultValue="33" className="h-2 w-full appearance-none rounded-full bg-[#a5a5a5] [&::-webkit-slider-thumb]:size-[23px] [&::-webkit-slider-thumb]:appearance-none [&::-webkit-slider-thumb]:rounded-full [&::-webkit-slider-thumb]:border [&::-webkit-slider-thumb]:border-[#bbb] [&::-webkit-slider-thumb]:bg-white" />
        <span className="pointer-events-none absolute left-[96px] h-[6px] w-[6px] rounded-full bg-[#dedede]" />
      </div>
      <button aria-label="Zoom in" className="ml-[46px]">
        <svg width="16" height="16" viewBox="0 0 16 16" stroke="#6e6e6e" strokeWidth="4"><path d="M8 0v16M0 8h16" /></svg>
      </button>
      <span className="ml-[64px] w-[88px]">70%</span>
      <button aria-label="Fit slide to window" className="mr-[56px]">
        <svg width="26" height="26" viewBox="0 0 26 26" fill="none" stroke="#6e6e6e" strokeWidth="1.500"><rect x="1" y="1" width="24" height="24" rx="1" /><path d="M13 4v7M13 15v7M4 13h7M15 13h7" /><path d="M10 7l3-4 3 4zM10 19l3 4 3-4zM7 10l-4 3 4 3zM19 10l4 3-4 3z" fill="#6e6e6e" stroke="none" /></svg>
      </button>
    </footer>
  );
}

const Handle = ({ className }) => <span className={"absolute size-[14px] rounded-full border-2 border-white bg-black " + className} />;

export default function App() {
  return (
    <div className="relative h-screen overflow-hidden bg-[#0a0a08] bg-[repeating-linear-gradient(110deg,rgba(0,0,0,0.9)_0_6px,transparent_6px_15px),repeating-linear-gradient(165deg,#2b2b29_0_6px,#141412_6px_10px)] pt-3 pr-[10px] pb-[14px] pl-[18px] font-[Inter,sans-serif]">
      <Handle className="-top-[8px] left-1/2 -ml-[7px]" />
      <Handle className="-bottom-[8px] left-1/2 -ml-[7px]" />
      <Handle className="top-1/2 -left-[8px] -mt-[7px]" />
      <Handle className="top-1/2 -right-[8px] -mt-[7px]" />
      <Handle className="-top-[8px] -left-[8px]" />
      <Handle className="-top-[8px] -right-[8px]" />
      <Handle className="-bottom-[8px] -left-[8px]" />
      <Handle className="-right-[8px] -bottom-[8px]" />
      <div className="relative flex h-full flex-col overflow-hidden rounded-lg bg-[#d68d76]">
        <TitleBar />
        <TabBar />
        <Ribbon />
        <div className="flex min-h-0 flex-1">
          <Thumbnails />
          <main className="flex min-w-0 flex-1 flex-col">
            <section className="flex min-h-0 flex-1 items-center justify-center bg-linear-to-b from-[#fcfcfc] to-[#ebebeb]">
              <Slide />
            </section>
            <section className="flex h-[63px] shrink-0 items-center border-t-2 border-[#cbcbcb] bg-white pt-2 pl-4">
              <p className="font-['Liberation_Sans'] text-[26px] leading-[30px] text-black">Click to add notes</p>
            </section>
          </main>
        </div>
        <StatusBar />
        <div className="absolute bottom-[26px] left-[22px] flex h-[42px] w-[224px] items-center rounded-full bg-[rgba(98,98,98,0.9)] pl-[18px] text-[16px] leading-[20px] font-bold whitespace-nowrap text-white">
          <svg width="30" height="28" viewBox="0 0 30 28" fill="none" stroke="#fff" strokeWidth="1.500" strokeLinejoin="round" aria-hidden="true">
            <path d="M4 1l8 6h6l8-6 3 14-6 3-8 9-8-9-6-3zM4 1l1 10 7-4M26 1l-1 10-7-4M5 11l-4 4M25 11l4 4M5 11l2 7M25 11l-2 7M5 11l8 7 2 9 2-9 8-7M7 18l6 0M23 18h-6M12 7l1 11M18 7l-1 11" />
          </svg>
          <span className="ml-[10px]">MADE WITH GIFOX</span>
        </div>
      </div>
    </div>
  );
}
